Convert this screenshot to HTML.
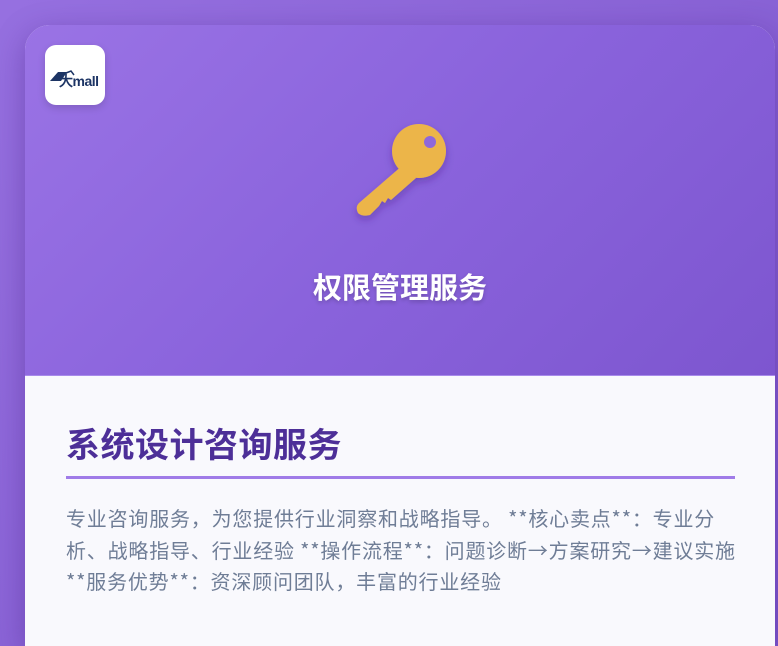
<!DOCTYPE html>
<html><head><meta charset="utf-8"><style>
html,body{margin:0;padding:0;width:778px;height:646px;overflow:hidden}
body{background:linear-gradient(135deg,#9670e0,#7d56cc);font-family:"Liberation Sans","Noto Sans CJK SC",sans-serif;position:relative}
.card{position:absolute;left:25px;top:25px;width:750px;height:621px;border-radius:25px 25px 0 0;overflow:hidden;box-shadow:0 8px 30px rgba(60,20,120,.35);background:#f9f9fd}
.hdr{position:absolute;left:0;top:0;width:750px;height:350px;background:linear-gradient(135deg,#9a73e5 0%,#8a63dc 50%,#7d56cf 100%);border-bottom:1px solid #a88bea}
.logo{position:absolute;left:20px;top:20px;width:60px;height:60px;background:#fff;border-radius:11px;box-shadow:0 3px 8px rgba(0,0,0,.15)}
.h1{position:absolute;left:0;width:750px;top:245px;text-align:center;color:#fff;font-size:29px;line-height:38px;font-weight:bold;text-shadow:0 2px 4px rgba(0,0,0,.2)}
.t{position:absolute;left:41px;top:393px;font-size:34px;font-weight:bold;color:#4d2f98;letter-spacing:0.5px}
.line{position:absolute;left:41px;top:451px;width:669px;height:3px;background:#a07ce8}
.p{position:absolute;left:41px;top:477px;width:676px;font-family:"Noto Sans CJK SC",sans-serif;font-size:20px;line-height:31.5px;color:#6f7d96;letter-spacing:0.8px}
</style></head><body>
<div class="card">
 <div class="hdr">
  <div class="logo"><svg width="60" height="60" viewBox="0 0 60 60">
   <path d="M5 36 L13 27 L22 27 L16 36Z" fill="#1c3464"/>
   <path d="M21 28 L26 26 L29 30" stroke="#1c3464" stroke-width="1.5" fill="none"/>
   <text x="14" y="41" font-family="Liberation Sans" font-weight="bold" font-size="14" fill="#1c3464" letter-spacing="-0.5">大mall</text>
  </svg></div>
  <svg style="position:absolute;left:305px;top:85px" width="140" height="120" viewBox="305 85 140 120">
   <defs><filter id="s" x="-30%" y="-30%" width="160%" height="160%"><feDropShadow dx="0" dy="4" stdDeviation="4" flood-color="#3a1a7a" flood-opacity=".35"/></filter></defs>
   <g filter="url(#s)" fill="#ecb54a">
    <circle cx="394" cy="126" r="27"/>
    <path d="M378 140 L391 153 L366 175 L363 173 L360 178 L357 176 L354 181 L345 190 Q337 192 333 188 Q330 182 334 178Z"/>
   </g>
   <circle cx="405" cy="117" r="6" fill="#8f68db"/>
  </svg>
  <div class="h1">权限管理服务</div>
 </div>
 <div class="t">系统设计咨询服务</div>
 <div class="line"></div>
 <div class="p">专业咨询服务，为您提供行业洞察和战略指导。 **核心卖点**：专业分析、战略指导、行业经验 **操作流程**：问题诊断→方案研究→建议实施 **服务优势**：资深顾问团队，丰富的行业经验</div>
</div>
</body></html>
